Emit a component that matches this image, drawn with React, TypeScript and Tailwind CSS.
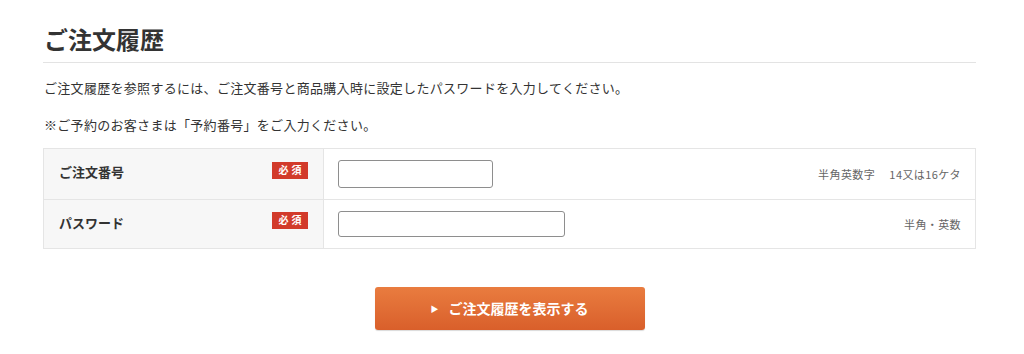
import React from "react";

const font = { fontFamily: '"Noto Sans CJK JP", "Noto Sans", sans-serif' };

function Badge() {
  return (
    <span className="mb-[8px] inline-flex h-[17px] w-[36px] items-center justify-center bg-[#d23a2a] text-[10px] font-bold leading-none tracking-[3px] text-white pl-[3px]">
      必須
    </span>
  );
}

export default function App() {
  return (
    <div className="min-h-[354px] bg-white pl-[43px] pr-[48px] text-[#333]" style={font}>
      <div className="border-b border-[#e3e3e3] pt-[23px] pb-[8px] pl-[1px]">
        <h1 className="text-[24px] font-bold leading-[31px] text-[#333]">ご注文履歴</h1>
      </div>
      <p className="mt-[15px] pl-[1px] text-[13px] leading-[20px] tracking-[0.3px]">
        ご注文履歴を参照するには、ご注文番号と商品購入時に設定したパスワードを入力してください。
      </p>
      <p className="mt-[17px] pl-[1px] text-[13px] leading-[20px] tracking-[0.3px]">
        ※ご予約のお客さまは「予約番号」をご入力ください。
      </p>
      <div className="mt-[13px] border border-[#e5e5e5]">
        <div className="flex h-[51px] border-b border-[#e5e5e5]">
          <div className="flex w-[280px] items-center justify-between border-r border-[#e5e5e5] bg-[#f7f7f7] pl-[15px] pr-[15px]">
            <span className="mb-[4px] text-[13px] font-bold">ご注文番号</span>
            <Badge />
          </div>
          <div className="flex flex-1 items-center justify-between pl-[14px] pr-[14px]">
            <input className="h-[28px] w-[155px] rounded-[3px] border border-[#8e8e8e] bg-white" />
            <span className="text-[11px] tracking-[0.4px] text-[#666]">半角英数字　 14又は16ケタ</span>
          </div>
        </div>
        <div className="flex h-[48px]">
          <div className="flex w-[280px] items-center justify-between border-r border-[#e5e5e5] bg-[#f7f7f7] pl-[15px] pr-[15px]">
            <span className="mb-[2px] text-[13px] font-bold">パスワード</span>
            <Badge />
          </div>
          <div className="flex flex-1 items-center justify-between pl-[14px] pr-[14px]">
            <input type="password" className="h-[26px] w-[227px] rounded-[3px] border border-[#8e8e8e] bg-white" />
            <span className="text-[11px] tracking-[0.4px] text-[#666]">半角・英数</span>
          </div>
        </div>
      </div>
      <div className="mt-[38px] flex justify-center">
        <button className="flex h-[43px] w-[270px] items-center justify-center gap-[10px] rounded-[3px] bg-gradient-to-b from-[#e97c3f] to-[#d95f2b] text-[14px] font-bold text-white shadow-[0_1px_1px_rgba(0,0,0,0.15)]">
          <span className="text-[8px]">▶</span>
          <span>ご注文履歴を表示する</span>
        </button>
      </div>
    </div>
  );
}
